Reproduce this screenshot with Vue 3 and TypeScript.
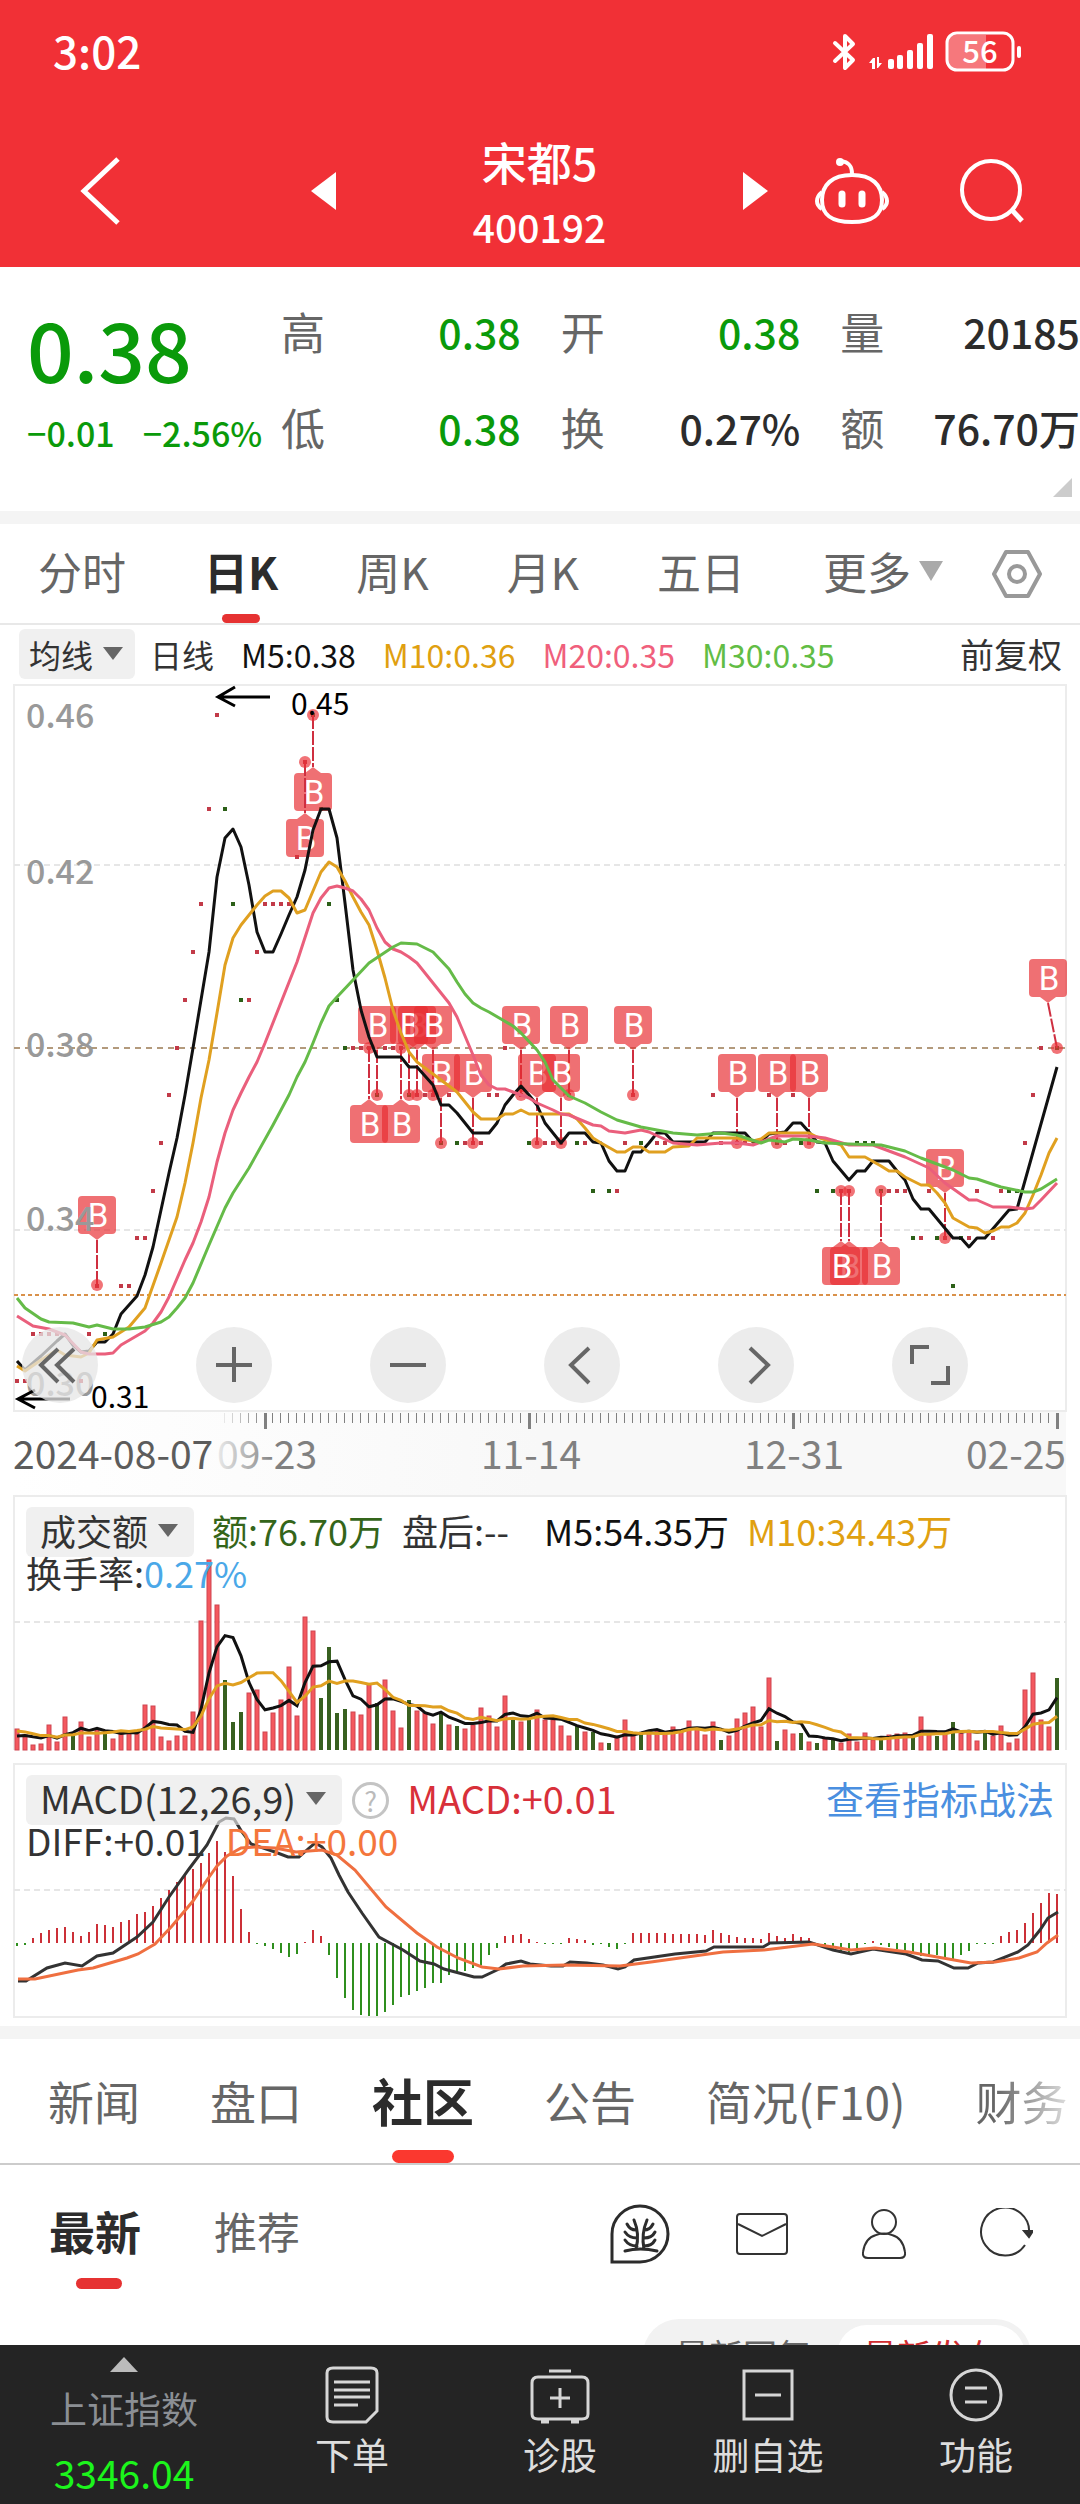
<script setup lang="ts">
type Point = [number, number]
type Tone = 'up' | 'down'

interface Stat { label: string; value: string; tone: 'green' | 'dark' }
interface Marker { at: number; anchor: number; box: number; boxX?: number }

const stats: Stat[] = [
  { label: '高', value: '0.38', tone: 'green' },
  { label: '开', value: '0.38', tone: 'green' },
  { label: '量', value: '20185', tone: 'dark' },
  { label: '低', value: '0.38', tone: 'green' },
  { label: '换', value: '0.27%', tone: 'dark' },
  { label: '额', value: '76.70万', tone: 'dark' },
]

const periods = ['分时', '日K', '周K', '月K', '五日']
const sections = ['新闻', '盘口', '社区', '公告', '简况(F10)', '财务']

const STEP = 8
const FIRST = 17
const COUNT = 131
const px = (i: number): number => FIRST + i * STEP
const join = (pts: Point[]): string => pts.map((p) => p.join(',')).join(' ')
const byDay = (pts: Point[]): string => join(pts.map(([i, y]): Point => [px(i), y]))

/* Moving averages of the price chart: [day, y] */
const m5 = byDay([
  [0, 1361], [1, 1370], [2, 1363], [3, 1356], [5, 1341], [6, 1334], [7, 1345], [8, 1352], [9, 1351], [10, 1342], [11, 1342],
  [12, 1334], [13, 1314], [14, 1305], [15, 1296], [16, 1275], [17, 1247], [18, 1210], [19, 1173], [20, 1138], [21, 1095],
  [22, 1048], [23, 1000], [24, 952], [25, 877], [26, 838], [27, 829], [28, 847], [29, 885], [30, 932], [31, 952], [32, 952],
  [33, 934], [34, 915], [35, 897], [36, 870], [37, 830], [38, 809], [39, 809], [40, 838], [41, 903], [42, 970], [43, 1010],
  [44, 1037], [45, 1057], [48, 1057], [49, 1067], [50, 1067], [51, 1076], [52, 1085], [53, 1105], [54, 1105], [55, 1113],
  [56, 1123], [57, 1133], [59, 1133], [60, 1123], [61, 1105], [62, 1095], [63, 1086], [64, 1095], [65, 1105], [66, 1123],
  [67, 1133], [68, 1143], [69, 1133], [71, 1133], [72, 1142], [73, 1143], [74, 1161], [75, 1171], [76, 1171], [77, 1152],
  [78, 1152], [79, 1143], [80, 1133], [81, 1133], [82, 1142], [86, 1142], [87, 1133], [91, 1133], [92, 1142], [93, 1142],
  [94, 1134], [96, 1132], [97, 1123], [98, 1123], [99, 1132], [100, 1142], [101, 1143], [102, 1161], [104, 1180], [105, 1171],
  [106, 1171], [107, 1161], [109, 1161], [110, 1171], [111, 1180], [112, 1199], [113, 1209], [114, 1209], [117, 1238],
  [118, 1238], [119, 1247], [120, 1238], [121, 1238], [124, 1210], [125, 1209], [130, 1067],
])
const m10 = byDay([
  [0, 1366], [1, 1371], [3, 1360], [5, 1350], [6, 1355], [8, 1357], [9, 1353], [10, 1340], [12, 1337], [14, 1327], [16, 1308],
  [18, 1263], [20, 1217], [21, 1183], [22, 1143], [23, 1098], [24, 1060], [25, 1013], [26, 965], [27, 938], [28, 925],
  [29, 915], [30, 905], [31, 896], [32, 891], [33, 891], [34, 898], [35, 913], [36, 910], [37, 891], [38, 872], [39, 862],
  [40, 867], [41, 881], [42, 897], [43, 912], [44, 925], [45, 950], [46, 978], [47, 1010], [48, 1033], [49, 1052], [50, 1062],
  [53, 1080], [55, 1092], [57, 1112], [58, 1119], [60, 1119], [61, 1114], [62, 1114], [63, 1110], [64, 1114], [69, 1114],
  [70, 1119], [71, 1128], [72, 1138], [73, 1143], [75, 1152], [76, 1152], [77, 1147], [78, 1147], [79, 1152], [81, 1152],
  [82, 1147], [84, 1146], [85, 1138], [90, 1138], [92, 1141], [93, 1139], [94, 1133], [99, 1133], [100, 1137], [103, 1145],
  [104, 1157], [106, 1157], [108, 1166], [109, 1171], [110, 1171], [111, 1177], [113, 1185], [114, 1185], [115, 1193],
  [116, 1203], [117, 1218], [119, 1227], [120, 1228], [121, 1233], [122, 1231], [123, 1227], [124, 1227], [125, 1223],
  [126, 1213], [127, 1195], [128, 1175], [129, 1153], [130, 1138],
])
const m20 = byDay([
  [0, 1316], [2, 1326], [4, 1329], [6, 1335], [8, 1352], [9, 1354], [11, 1354], [12, 1353], [13, 1345], [16, 1331], [17, 1323],
  [18, 1312], [19, 1297], [21, 1260], [22, 1243], [23, 1222], [24, 1197], [25, 1162], [26, 1133], [27, 1110], [28, 1093],
  [29, 1077], [30, 1062], [31, 1043], [35, 962], [37, 913], [38, 898], [39, 888], [40, 886], [41, 888], [42, 891], [43, 899],
  [44, 910], [45, 928], [46, 942], [47, 949], [48, 952], [49, 957], [50, 963], [54, 1003], [55, 1017], [57, 1055], [58, 1075],
  [59, 1085], [60, 1089], [61, 1089], [62, 1092], [64, 1098], [65, 1103], [67, 1110], [68, 1114], [69, 1115], [72, 1125],
  [73, 1126], [74, 1131], [76, 1133], [78, 1130], [79, 1132], [82, 1143], [85, 1145], [88, 1143], [90, 1143], [92, 1145],
  [94, 1139], [95, 1136], [99, 1136], [101, 1138], [104, 1145], [107, 1145], [111, 1157], [114, 1168], [116, 1183],
  [119, 1200], [120, 1200], [122, 1207], [124, 1207], [126, 1209], [127, 1208], [128, 1200], [130, 1183],
])
const m30 = byDay([
  [0, 1298], [1, 1308], [3, 1319], [4, 1322], [7, 1323], [9, 1327], [10, 1325], [12, 1329], [14, 1329], [16, 1327], [18, 1322],
  [19, 1317], [20, 1308], [21, 1298], [22, 1283], [24, 1245], [26, 1208], [27, 1193], [29, 1168], [32, 1125], [34, 1095],
  [35, 1077], [36, 1062], [37, 1043], [38, 1023], [39, 1006], [40, 997], [44, 963], [47, 947], [48, 943], [50, 944], [52, 952],
  [54, 969], [55, 982], [56, 994], [57, 1003], [58, 1008], [59, 1012], [62, 1026], [63, 1033], [65, 1050], [66, 1062],
  [67, 1080], [69, 1096], [71, 1103], [73, 1112], [75, 1120], [78, 1127], [82, 1133], [85, 1135], [88, 1133], [90, 1135],
  [93, 1143], [94, 1140], [96, 1142], [97, 1139], [99, 1140], [101, 1143], [104, 1144], [108, 1145], [111, 1151], [113, 1158],
  [117, 1170], [119, 1178], [120, 1179], [123, 1187], [126, 1192], [127, 1192], [128, 1189], [130, 1179],
])

/* One-price days, grouped by their price line */
const ticks: { y: number; up: number[]; down: number[] }[] = [
  { y: 715, up: [25], down: [37] },
  { y: 762, up: [36], down: [] },
  { y: 809, up: [24], down: [26, 38] },
  { y: 857, up: [35], down: [] },
  { y: 904, up: [23, 31, 32, 33, 34], down: [27, 39] },
  { y: 952, up: [22, 30], down: [] },
  { y: 1000, up: [21, 29], down: [28, 40] },
  { y: 1048, up: [20, 42, 43, 44, 46, 47, 48, 61, 128], down: [41, 130] },
  { y: 1095, up: [19, 50, 51, 52, 54, 59, 60, 63, 69, 77, 87, 94, 97, 127], down: [45, 49] },
  { y: 1143, up: [18, 56, 57, 58, 65, 66, 67, 68, 71, 76, 80, 81, 88, 90, 91, 96, 99, 126], down: [53, 55, 64, 70, 78, 95, 98, 105, 106, 107] },
  { y: 1191, up: [17, 75, 103, 104, 109, 110, 111, 114, 120, 123], down: [72, 74, 100, 102, 108, 124, 125] },
  { y: 1238, up: [15, 16, 113, 116, 119, 122], down: [112, 115, 118] },
  { y: 1286, up: [10, 13, 14], down: [117] },
  { y: 1334, up: [2, 3, 4, 5, 9], down: [11] },
  { y: 1381, up: [0, 1, 8], down: [] },
]

const row = (days: number[], anchor: number, box: number): Marker[] => days.map((at) => ({ at, anchor, box }))
const markers: Marker[] = [
  { at: 37, anchor: 715, box: 773 },
  { at: 36, anchor: 762, box: 819 },
  ...row([45, 50, 49, 52], 1095, 1006),
  ...row([63, 69, 77], 1095, 1006),
  ...row([53, 57, 65, 68, 90, 95, 99], 1143, 1054),
  ...row([44, 48], 1048, 1105),
  ...row([108, 104, 103], 1191, 1247),
  { at: 116, anchor: 1238, box: 1149 },
  { at: 10, anchor: 1285, box: 1196 },
  { at: 130, anchor: 1048, box: 959, boxX: 1048 },
]
const markerX = (m: Marker): number => m.boxX ?? px(m.at)
const isBelow = (m: Marker): boolean => m.box > m.anchor
const tipY = (m: Marker): number => (isBelow(m) ? m.box - 6 : m.box + 44)
const bubble = (m: Marker): string => {
  const x = markerX(m)
  const t = m.box
  const b = t + 38
  const top = isBelow(m) ? `H${x - 8}L${x} ${t - 6}L${x + 8} ${t}H${x + 15}` : `H${x + 15}`
  const bottom = isBelow(m) ? `H${x - 15}` : `H${x + 8}L${x} ${b + 6}L${x - 8} ${b}H${x - 15}`
  return `M${x - 15} ${t}${top}q4 0 4 4V${b - 4}q0 4 -4 4${bottom}q-4 0 -4 -4V${t + 4}q0 -4 4 -4Z`
}

/* Turnover */
const turnover: number[] = [
  21, 15, 5, 6, 25, 8, 33, 15, 28, 13, 20, 20, 11, 19, 18, 17, 45, 44, 13, 9, 14, 14, 38, 129, 190, 145, 70, 28, 38, 57, 60, 18,
  37, 50, 83, 34, 133, 119, 52, 103, 37, 41, 38, 35, 65, 47, 70, 39, 22, 50, 39, 37, 26, 37, 25, 24, 21, 25, 42, 34, 23, 54, 32,
  28, 30, 40, 30, 30, 24, 14, 24, 18, 18, 7, 7, 14, 30, 17, 17, 18, 20, 17, 23, 20, 29, 22, 15, 28, 10, 14, 31, 37, 43, 23, 72,
  9, 20, 16, 17, 8, 7, 12, 12, 7, 16, 8, 17, 10, 13, 15, 16, 17, 13, 33, 15, 14, 16, 28, 17, 19, 9, 20, 14, 24, 7, 11, 60, 77,
  30, 23, 72,
]
const falling = new Set<number>([
  7, 11, 26, 27, 28, 38, 39, 40, 41, 45, 49, 53, 55, 62, 64, 70, 72, 74, 78, 88, 95, 98, 100, 102, 108, 112, 115, 117, 121, 130,
])
const toneOf = (i: number): Tone => (falling.has(i) ? 'down' : 'up')
const earlier = [24, 24, 24, 24, 24, 12, 12, 12, 13]
const average = (span: number): string => {
  const all = [...earlier, ...turnover]
  return join(turnover.map((_, i): Point => {
    const end = i + earlier.length + 1
    const sum = all.slice(end - span, end).reduce((a, b) => a + b, 0)
    return [px(i), Math.round((1750 - sum / span) * 10) / 10]
  }))
}
const volM5 = average(5)
const volM10 = average(10)

/* MACD */
const macd: number[] = [
  -3, -2, 5, 10, 13, 15, 16, 11, 7, 11, 19, 18, 16, 21, 23, 29, 31, 37, 45, 53, 61, 68, 74, 80, 90, 102, 91, 67, 34, 11, 0, -3,
  -6, -10, -14, -11, 1, 13, 7, -12, -35, -55, -67, -72, -73, -73, -69, -62, -54, -52, -48, -45, -40, -40, -32, -30, -28, -25,
  -22, -12, -5, 7, 8, 9, 4, 1, -1, -1, -1, 5, 4, 3, -2, -1, -4, -6, -1, 10, 10, 10, 10, 10, 9, 9, 9, 9, 8, 13, 10, 8, 6, 5, 5,
  4, 10, 7, 5, 9, 6, 5, -1, -3, -6, -8, -9, -5, -1, 2, -2, -4, -6, -8, -10, -13, -12, -12, -14, -16, -12, -8, -1, -1, -1, 7,
  11, 13, 20, 30, 40, 50, 49,
]
const diff = join([
  [18, 1981], [26, 1981], [47, 1968], [65, 1963], [82, 1966], [97, 1956], [113, 1953], [137, 1937], [153, 1922], [169, 1897],
  [189, 1869], [207, 1845], [219, 1822], [226, 1818], [234, 1819], [242, 1832], [251, 1844], [275, 1852], [288, 1857],
  [299, 1857], [308, 1849], [315, 1843], [322, 1847], [331, 1858], [339, 1875], [348, 1892], [362, 1913], [379, 1937],
  [403, 1950], [420, 1961], [434, 1964], [444, 1969], [474, 1977], [482, 1977], [499, 1969], [506, 1964], [521, 1961],
  [530, 1964], [551, 1966], [563, 1966], [570, 1962], [587, 1963], [603, 1965], [618, 1969], [625, 1967], [634, 1960],
  [675, 1954], [706, 1951], [714, 1947], [763, 1947], [770, 1943], [809, 1942], [833, 1950], [851, 1954], [873, 1949],
  [906, 1954], [922, 1960], [938, 1961], [954, 1968], [968, 1968], [978, 1963], [993, 1962], [1018, 1952], [1028, 1945],
  [1040, 1930], [1048, 1918], [1058, 1912],
])
const dea = join([
  [18, 1979], [35, 1979], [78, 1970], [93, 1968], [127, 1958], [138, 1954], [155, 1944], [172, 1926], [193, 1901], [207, 1880],
  [217, 1866], [227, 1856], [241, 1848], [255, 1847], [275, 1848], [296, 1852], [322, 1850], [337, 1855], [355, 1870],
  [386, 1907], [417, 1933], [437, 1947], [458, 1958], [482, 1967], [499, 1969], [523, 1966], [565, 1965], [620, 1966],
  [651, 1962], [723, 1952], [764, 1950], [813, 1944], [833, 1947], [851, 1950], [875, 1948], [909, 1952], [971, 1963],
  [995, 1962], [1019, 1958], [1037, 1952], [1047, 1943], [1058, 1935],
])

const scale = Array.from({ length: COUNT - 26 }, (_, n) => n + 26)
const majors = new Set([31, 64, 97, 130])
</script>

<template>
  <div class="app">
    <header class="top">
      <div class="status">
        <span>3:02</span>
        <svg width="192" height="44" viewBox="830 30 192 44" aria-hidden="true">
          <g fill="none" stroke="#fff" stroke-width="4" stroke-linejoin="round" stroke-linecap="round">
            <path d="M835 43 853 60 845 68V36L853 44 835 61" />
          </g>
          <g fill="#fff">
            <path d="M869 63l4-5h2v11h-3v-6zM882 63l-4 5h-1V57h2v6z" />
            <rect x="888" y="59" width="6" height="10" rx="2" />
            <rect x="897" y="55" width="6" height="14" rx="2" />
            <rect x="907" y="50" width="6" height="19" rx="2" />
            <rect x="917" y="43" width="6" height="26" rx="2" />
            <rect x="927" y="34" width="6" height="35" rx="2" />
            <rect x="1017" y="46" width="4" height="12" rx="2" />
            <path d="M952 35h34v34h-34q-4 0-4-6V41q0-6 4-6z" opacity=".35" />
          </g>
          <rect x="947" y="33" width="66" height="37" rx="10" fill="none" stroke="#fff" stroke-width="3" />
          <text x="980" y="63" class="battery">56</text>
        </svg>
      </div>
      <div class="bar">
        <button class="ib back" aria-label="返回">
          <svg width="44" height="72" viewBox="0 0 44 72"><path d="M39 4 5 36 39 68" fill="none" stroke="#fff" stroke-width="5" /></svg>
        </button>
        <button class="ib" aria-label="上一只">
          <svg width="26" height="40" viewBox="0 0 26 40"><path d="M0 20 25 1V39Z" fill="#fff" /></svg>
        </button>
        <h1 class="title"><span>宋都5</span><small>400192</small></h1>
        <button class="ib" aria-label="下一只">
          <svg width="26" height="40" viewBox="0 0 26 40"><path d="M26 20 1 1V39Z" fill="#fff" /></svg>
        </button>
        <div class="tools">
          <button class="ib" aria-label="智能助手">
            <svg width="74" height="70" viewBox="0 0 74 70" fill="none" stroke="#fff" stroke-width="4">
              <path d="M37 18C37 9 33 6 26 5" stroke-width="4" />
              <circle cx="25" cy="6" r="3" fill="#fff" stroke-width="2" />
              <path d="M37 19C57 19 67 29 67 44S58 66 37 66 7 59 7 44 17 19 37 19Z" />
              <path d="M7 36Q2 40 2 45T7 53M67 36Q72 40 72 45T67 53" stroke-width="4" />
              <path d="M27 38V48M47 38V48" stroke-width="7" stroke-linecap="round" />
            </svg>
          </button>
          <button class="ib" aria-label="搜索">
            <svg width="66" height="66" viewBox="0 0 66 66" fill="none" stroke="#fff" stroke-width="4">
              <circle cx="32" cy="32" r="29" /><path d="M53 52 63 63" stroke-width="5" />
            </svg>
          </button>
        </div>
      </div>
    </header>

    <main class="body">
      <section class="quote">
        <div class="price">
          <strong>0.38</strong>
          <p><span>−0.01</span><span>−2.56%</span></p>
        </div>
        <dl class="stats">
          <div v-for="s in stats" :key="s.label"><dt>{{ s.label }}</dt><dd :class="s.tone">{{ s.value }}</dd></div>
        </dl>
        <i class="fold"></i>
      </section>

      <nav class="periods">
        <div class="tabs">
          <button v-for="p in periods" :key="p" :class="{ on: p === '日K' }">{{ p }}</button>
          <button class="more">更多<i class="caret light"></i></button>
        </div>
        <button class="ib gear" aria-label="设置">
          <svg width="52" height="50" viewBox="0 0 52 50" fill="none" stroke="#999" stroke-width="4" stroke-linejoin="round">
            <path d="M15 3H37L49 25 37 47H15L3 25Z" /><circle cx="26" cy="25" r="8" />
          </svg>
        </button>
      </nav>

      <div class="averages">
        <button class="chip small">均线<i class="caret"></i></button>
        <span>日线</span>
        <span class="c-black">M5:0.38</span>
        <span class="c-gold">M10:0.36</span>
        <span class="c-pink">M20:0.35</span>
        <span class="c-green">M30:0.35</span>
        <button class="adjust">前复权</button>
      </div>

      <section class="layered">
        <svg class="chart" viewBox="0 684 1080 728">
          <rect x="14" y="685" width="1052" height="726" class="frame" />
          <path d="M14 865H1066M14 1230H1066" class="grid" />
          <path d="M14 1048H1066" stroke="#b39a7c" stroke-width="2" stroke-dasharray="6 5" />
          <path d="M14 1295H1066" stroke="#d9914a" stroke-width="2" stroke-dasharray="4 3" />
          <g class="axis">
            <text x="26" y="728">0.46</text>
            <text x="26" y="884">0.42</text>
            <text x="26" y="1057">0.38</text>
            <text x="26" y="1396">0.30</text>
          </g>
          <template v-for="t in ticks" :key="t.y">
            <rect v-for="i in t.up" :key="'u' + i" :x="px(i) - 2" :y="t.y - 2" width="4" height="4" fill="#c23a48" />
            <rect v-for="i in t.down" :key="'d' + i" :x="px(i) - 2" :y="t.y - 2" width="4" height="4" fill="#2c6018" />
          </template>
          <g v-for="(m, n) in markers" :key="n">
            <line :x1="px(m.at)" :y1="m.anchor" :x2="markerX(m)" :y2="tipY(m)" stroke="#cf2f40" stroke-width="2" stroke-dasharray="14 2" />
            <circle :cx="px(m.at)" :cy="m.anchor" r="6" fill="#ea3136" fill-opacity=".68" />
            <path :d="bubble(m)" fill="#e82c30" fill-opacity=".68" />
            <text :x="markerX(m) + 1" :y="m.box + 31" class="b">B</text>
          </g>
          <g class="axis"><text x="26" y="1231">0.34</text></g>
          <g fill="none" stroke-width="3" stroke-linejoin="round">
            <polyline :points="m5" stroke="#111" />
            <polyline :points="m10" stroke="#e0a020" />
            <polyline :points="m20" stroke="#ea5f7c" />
            <polyline :points="m30" stroke="#65bb48" />
          </g>
          <g fill="none" stroke="#000" stroke-width="3">
            <path d="M270 697H218M235 687 218 697 235 706" />
            <path d="M70 1399H18M35 1390 18 1399 35 1408" />
          </g>
          <g class="extreme">
            <text x="291" y="715">0.45</text>
            <text x="91" y="1408">0.31</text>
          </g>
        </svg>
        <div class="controls">
          <button aria-label="收起"><svg viewBox="0 0 76 76"><path d="M36 22 19 38 36 55M52 22 35 38 52 55" /></svg></button>
          <button aria-label="放大"><svg viewBox="0 0 76 76"><path d="M38 20V55M20 38H56" /></svg></button>
          <button aria-label="缩小"><svg viewBox="0 0 76 76"><path d="M20 38H56" /></svg></button>
          <button aria-label="左移"><svg viewBox="0 0 76 76"><path d="M45 21 27 38 45 56" /></svg></button>
          <button aria-label="右移"><svg viewBox="0 0 76 76"><path d="M32 21 50 38 32 56" /></svg></button>
          <button aria-label="全屏"><svg viewBox="0 0 76 76"><path d="M37 20H20V37M56 39V56H39" /></svg></button>
        </div>
      </section>

      <svg class="chart" viewBox="0 1412 1080 83">
        <defs>
          <linearGradient id="rail"><stop offset="0" stop-color="#fff" /><stop offset=".5" stop-color="#f8f8f8" /></linearGradient>
          <linearGradient id="fade" gradientUnits="userSpaceOnUse" x1="215" x2="275" y1="0" y2="0">
            <stop offset="0" stop-color="#eee" /><stop offset="1" stop-color="#808080" />
          </linearGradient>
        </defs>
        <rect x="14" y="1412" width="1052" height="83" fill="url(#rail)" />
        <g fill="#808080">
          <rect v-for="i in scale" :key="i" :x="px(i) - 1" y="1413" :width="majors.has(i) ? 3 : 1" :height="majors.has(i) ? 16 : 10" :opacity="i < 31 ? (i - 25) / 6 : 1" />
        </g>
        <g class="dates">
          <text x="217" y="1469" fill="url(#fade)">09-23</text>
          <text x="531" y="1469" text-anchor="middle">11-14</text>
          <text x="794" y="1469" text-anchor="middle">12-31</text>
          <text x="1066" y="1469" text-anchor="end">02-25</text>
          <text x="13" y="1469" fill="#5c5c5c">2024-08-07</text>
        </g>
      </svg>

      <section class="layered">
        <svg class="chart" viewBox="0 1495 1080 268">
          <path d="M14 1750V1496H1066V1750" class="frame" />
          <path d="M14 1622H1066" class="grid" />
          <template v-for="(h, i) in turnover" :key="i">
            <rect v-if="toneOf(i) === 'down'" :x="px(i) - 2" :y="1750 - h" width="4" :height="h" fill="#386020" />
            <rect v-else :x="px(i) - 2" :y="1750 - h" width="4" :height="h" fill="#f4585e" stroke="#cf4450" />
          </template>
          <polyline :points="volM5" fill="none" stroke="#111" stroke-width="3" />
          <polyline :points="volM10" fill="none" stroke="#e0a020" stroke-width="3" />
        </svg>
        <div class="legend">
          <div class="line">
            <button class="chip">成交额<i class="caret"></i></button>
            <span class="c-deep">额:76.70万</span>
            <span class="after">盘后:--</span>
            <span class="c-black">M5:54.35万</span>
            <span class="c-gold">M10:34.43万</span>
          </div>
          <div class="line second"><span>换手率:<b class="c-blue">0.27%</b></span></div>
        </div>
      </section>

      <section class="layered">
        <svg class="chart" viewBox="0 1763 1080 263">
          <rect x="14" y="1764" width="1052" height="253" class="frame" />
          <path d="M14 1890H1066" class="grid" />
          <rect v-for="(h, i) in macd" :key="i" :x="px(i) - 1" :y="h > 0 ? 1943 - h : 1943" width="2" :height="Math.max(Math.abs(h), 1)" :fill="h > 0 ? '#cc3038' : '#2f8f1e'" />
          <polyline :points="diff" fill="none" stroke="#333" stroke-width="3" />
          <polyline :points="dea" fill="none" stroke="#ef6f40" stroke-width="3" />
        </svg>
        <div class="legend large">
          <div class="line">
            <button class="chip">MACD(12,26,9)<i class="caret"></i></button>
            <button class="help" aria-label="指标说明">?</button>
            <span class="c-red">MACD:+0.01</span>
            <a href="#tactics">查看指标战法</a>
          </div>
          <div class="line second"><span>DIFF:+0.01</span><span class="c-orange">DEA:+0.00</span></div>
        </div>
      </section>

      <nav class="sections">
        <button v-for="s in sections" :key="s" :class="{ on: s === '社区', last: s === '财务' }">{{ s }}</button>
      </nav>

      <div class="feed">
        <button class="on">最新</button>
        <button>推荐</button>
        <div class="actions">
          <button class="ib" aria-label="韭菜圈">
            <svg width="60" height="60" viewBox="0 0 60 60" fill="none" stroke="#2c2c2c" stroke-width="3" stroke-linecap="round">
              <path d="M2 58V30A28 28 0 1 1 30 58Z" stroke-linecap="butt" />
              <path d="M26 45Q30 30 24 16M34 45Q31 30 37 16M26 26Q20 26 17 20M27 34Q19 34 15 28M27 42Q19 42 15 36M34 26Q40 26 43 20M34 34Q42 34 45 28M34 42Q42 42 45 36M15 47Q30 43 47 47" />
            </svg>
          </button>
          <button class="ib" aria-label="消息">
            <svg width="54" height="44" viewBox="0 0 54 44" fill="none" stroke="#333" stroke-width="2"><rect x="2" y="2" width="50" height="40" rx="3" /><path d="M3 12 27 24 51 12" /></svg>
          </button>
          <button class="ib" aria-label="我的">
            <svg width="46" height="52" viewBox="0 0 46 52" fill="none" stroke="#333" stroke-width="2"><circle cx="23" cy="14" r="12" /><path d="M15 27Q4 30 2 44Q1 50 7 50H39Q45 50 44 44Q42 30 31 27Q23 24 15 27Z" /></svg>
          </button>
          <button class="ib" aria-label="刷新">
            <svg width="54" height="52" viewBox="0 0 54 52" fill="none" stroke="#333" stroke-width="2"><path d="M46 37A24 24 0 1 1 50 26" /><path d="M45 23H54L50 29Z" fill="#333" /></svg>
          </button>
        </div>
      </div>

      <div class="sort">
        <div class="pill"><button>最新回复</button><button class="on">最新发布</button></div>
      </div>
    </main>

    <footer class="dock">
      <button class="index"><i class="up"></i><span>上证指数</span><b>3346.04</b></button>
      <button>
        <svg width="60" height="60" viewBox="0 0 60 60"><path d="M11 3H49Q55 3 55 8V46L44 57H11Q5 57 5 52V8Q5 3 11 3ZM12 17H48M12 25H48M12 32H48M12 40H36" /></svg>
        <span>下单</span>
      </button>
      <button>
        <svg width="60" height="60" viewBox="0 0 60 60"><path d="M19 6H41M8 12H52Q58 12 58 18V49Q58 54 52 54H8Q2 54 2 49V18Q2 12 8 12ZM30 23V43M20 33H40M11 57H19M41 57H49" /></svg>
        <span>诊股</span>
      </button>
      <button>
        <svg width="60" height="60" viewBox="0 0 60 60"><path d="M6 6H54V54H6ZM17 30H43" /></svg>
        <span>删自选</span>
      </button>
      <button>
        <svg width="60" height="60" viewBox="0 0 60 60"><circle cx="30" cy="30" r="25" /><path d="M19 23H41M19 37H41" /></svg>
        <span>功能</span>
      </button>
    </footer>
  </div>
</template>

<style>
body { margin: 0; background: #fff; }
</style>

<style scoped>
.app {
  display: flex;
  flex-direction: column;
  height: 100vh;
  overflow: hidden;
  font-family: "Noto Sans CJK SC", "Noto Sans", sans-serif;
  color: #333;
}
* { box-sizing: border-box; }
button {
  padding: 0;
  border: 0;
  background: none;
  color: inherit;
  font: inherit;
  white-space: nowrap;
}
svg { display: block; }
.ib { display: flex; }

.top { flex: none; background: #f13036; color: #fff; }
.status {
  display: flex;
  align-items: center;
  justify-content: space-between;
  height: 104px;
  padding: 0 58px 0 53px;
  font-size: 44px;
  line-height: 60px;
  font-weight: 500;
}
.status span { padding-bottom: 4px; }
.battery { font-size: 31px; font-weight: 500; fill: #fff; text-anchor: middle; }
.bar {
  display: grid;
  grid-template-columns: 232px 26px 1fr 26px 312px;
  align-items: center;
  height: 163px;
  padding: 10px 0 0 79px;
}
.back { justify-self: start; }
.title {
  display: flex;
  flex-direction: column;
  align-items: center;
  margin: 0;
  padding-top: 6px;
  font-size: 45px;
  line-height: 64px;
  font-weight: 500;
}
.title small { font-size: 39px; }
.tools { display: flex; align-items: center; gap: 70px; padding-left: 47px; }

.body { flex: 1; min-height: 0; overflow: hidden; }

.quote {
  position: relative;
  display: flex;
  height: 257px;
  border-bottom: 13px solid #f4f4f4;
}
.price { width: 281px; flex: none; padding: 34px 0 0 27px; color: #0a9a0a; }
.price strong { display: block; font-size: 82px; line-height: 94px; font-weight: 500; }
.price p {
  display: flex;
  gap: 28px;
  margin: 16px 0 0;
  font-size: 34px;
  line-height: 44px;
  font-weight: 500;
  white-space: nowrap;
}
.stats {
  flex: 1;
  display: grid;
  grid-template-columns: repeat(3, 1fr);
  column-gap: 40px;
  grid-auto-rows: 96px;
  margin: 0;
  padding-top: 16px;
}
.stats div { display: flex; align-items: center; justify-content: space-between; }
.stats dt { font-size: 44px; line-height: 60px; color: #666; }
.stats dd { margin: 0; font-size: 41px; line-height: 60px; font-weight: 500; white-space: nowrap; }
.green { color: #0a9a0a; }
.dark { color: #2c2c2c; }
.fold {
  position: absolute;
  right: 8px;
  bottom: 14px;
  border: solid transparent;
  border-width: 0 0 19px 19px;
  border-bottom-color: #ccc;
}

.periods {
  display: flex;
  justify-content: space-between;
  height: 101px;
  padding: 0 37px 0 38px;
  border-bottom: 2px solid #e8e8e8;
  font-size: 44px;
  color: #666;
}
.tabs { display: flex; align-items: stretch; gap: 78px; }
.tabs button { position: relative; padding-bottom: 6px; }
.periods .on { color: #2c2c2c; font-weight: 700; }
.periods .on::after,
.sections .on::after,
.feed .on::after {
  content: "";
  position: absolute;
  left: 50%;
  bottom: 0;
  width: 38px;
  height: 9px;
  border-radius: 5px;
  background: #e63232;
  transform: translateX(-50%);
}
.periods .more { display: flex; align-items: center; gap: 8px; }
.periods .gear { align-items: center; }
.caret {
  flex: none;
  border: solid transparent;
  border-width: 13px 10px 0;
  border-top-color: #666;
}
.caret.light { border-width: 20px 12px 0; border-top-color: #aaa; }

.averages {
  display: flex;
  align-items: center;
  gap: 27px;
  height: 59px;
  padding: 0 18px 2px 19px;
  font-size: 32px;
  line-height: 48px;
  white-space: nowrap;
}
.chip {
  display: flex;
  align-items: center;
  gap: 10px;
  height: 50px;
  padding: 0 16px 4px 14px;
  border-radius: 6px;
  background: rgba(232, 232, 232, 0.65);
}
.chip.small { padding: 0 12px 0 10px; margin-right: -12px; }
.adjust { margin-left: auto; font-size: 34px; }
.c-black { color: #111; }
.c-gold { color: #e0a010; }
.c-pink { color: #f0607c; }
.c-green { color: #62bd45; }
.c-deep { color: #34651a; }
.c-blue { color: #4aa8e8; font-weight: 400; }
.c-red { color: #d8303a; }
.c-orange { color: #f4763c; }

.layered { position: relative; }
.chart { width: 100%; height: auto; }
.frame { fill: none; stroke: #ececec; stroke-width: 2; }
.grid { stroke: #e6e6e6; stroke-width: 2; stroke-dasharray: 6 4; }
.axis { font-size: 34px; font-weight: 500; fill: #999; }
.extreme { font-size: 30px; fill: #000; }
.b { font-family: Roboto, sans-serif; font-size: 33px; fill: #fff; text-anchor: middle; }
.dates { font-size: 39px; fill: #808080; }

.controls {
  position: absolute;
  left: 22px;
  right: 112px;
  bottom: 9px;
  display: flex;
  justify-content: space-between;
}
.controls button {
  width: 76px;
  height: 76px;
  border-radius: 50%;
  background: rgba(230, 230, 230, 0.75);
}
.controls path { fill: none; stroke: #666; stroke-width: 4; }

.legend { position: absolute; left: 26px; right: 26px; top: 12px; font-size: 36px; line-height: 50px; }
.legend.large { font-size: 38px; }
.line { display: flex; align-items: center; gap: 18px; height: 50px; white-space: nowrap; }
.line > span,
.line > a { padding-bottom: 4px; }
.line.second { gap: 20px; height: 34px; font-size: 36px; }
.large .line.second { font-size: 37px; }
.line a { margin-left: auto; color: #4a8fe0; text-decoration: none; }
.after { min-width: 124px; }
.help {
  width: 37px;
  height: 37px;
  margin: 0 0 0 -8px;
  border: 3px solid #c4c4c4;
  border-radius: 50%;
  color: #bbb;
  font-size: 27px;
  line-height: 31px;
}

.sections {
  display: flex;
  gap: 70px;
  height: 139px;
  padding-left: 48px;
  border-top: 13px solid #f4f4f4;
  border-bottom: 2px solid #ccc;
  font-size: 46px;
  color: #666;
  overflow: hidden;
}
.sections button { position: relative; padding-bottom: 2px; }
.sections .on { font-size: 51px; font-weight: 700; color: #2c2c2c; }
.sections .on::after { width: 62px; height: 13px; border-radius: 7px; background: #fb382f; }
.sections .last {
  background: linear-gradient(90deg, #666 20%, #ddd);
  background-clip: text;
  color: transparent;
}

.feed {
  display: flex;
  align-items: center;
  height: 134px;
  padding: 0 44px 0 49px;
  gap: 73px;
  font-size: 43px;
  line-height: 60px;
  color: #666;
}
.feed > button { position: relative; height: 100%; padding-bottom: 4px; }
.feed .on { font-size: 46px; font-weight: 700; color: #2c2c2c; }
.feed .on::after { left: 54%; width: 46px; height: 11px; border-radius: 6px; bottom: 10px; }
.actions { display: flex; align-items: center; gap: 62px; margin-left: auto; padding-top: 4px; }
.actions button { width: 60px; justify-content: center; }

.sort { display: flex; justify-content: flex-end; padding: 20px 49px 0 0; }
.pill {
  display: flex;
  padding: 6px;
  border-radius: 38px;
  background: #f2f2f2;
  font-size: 34px;
  line-height: 60px;
  color: #666;
}
.pill button { padding: 0 26px; border-radius: 31px; }
.pill .on { background: #fff; color: #d02c30; }

.dock {
  flex: none;
  display: grid;
  grid-template-columns: 248px repeat(4, 1fr);
  height: 159px;
  background: #242424;
  color: #ddd;
  font-size: 37px;
  line-height: 50px;
}
.dock button { display: flex; flex-direction: column; align-items: center; padding-top: 20px; gap: 4px; }
.dock svg { fill: none; stroke: #d6d6d6; stroke-width: 3; }
.dock .index { padding-top: 12px; gap: 0; color: #8b8f94; }
.dock .index span { margin-top: 11px; }
.dock .index b { margin-top: 14px; color: #1cf51c; font-size: 39px; font-weight: 400; }
.up { border: solid transparent; border-width: 0 14px 15px; border-bottom-color: #bbb; }
</style>
